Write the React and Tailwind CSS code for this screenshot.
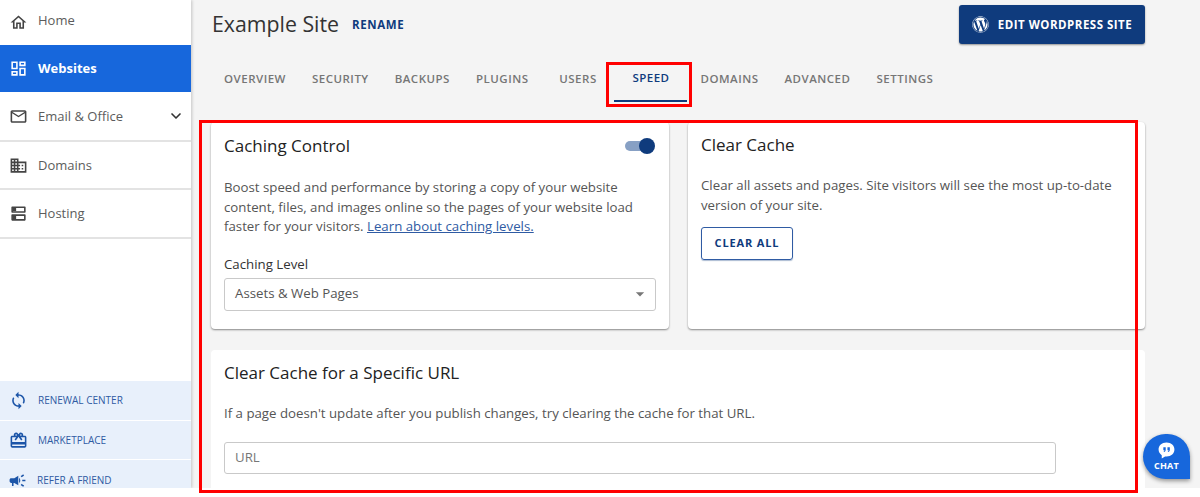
import React from 'react';
import { ChevronDown } from 'lucide-react';
import { FaWordpress } from 'react-icons/fa';
import {
  MdOutlineHome, MdOutlineDashboard, MdOutlineMailOutline, MdOutlineDomain,
  MdSync, MdOutlineRedeem, MdCampaign, MdArrowDropDown,
} from 'react-icons/md';

const font = { fontFamily: "'Open Sans', sans-serif" };

function HostingIcon({ className }) {
  return (
    <svg viewBox="0 0 24 24" className={className} fill="currentColor">
      <path fillRule="evenodd" d="M4 3h16a1 1 0 0 1 1 1v6a1 1 0 0 1-1 1H4a1 1 0 0 1-1-1V4a1 1 0 0 1 1-1zm1 2v4h14V5H5zM4 13h16a1 1 0 0 1 1 1v6a1 1 0 0 1-1 1H4a1 1 0 0 1-1-1v-6a1 1 0 0 1 1-1zm1 2v4h14v-4H5z" />
      <rect x="5" y="5" width="4" height="4" />
      <rect x="5" y="15" width="4" height="4" />
    </svg>
  );
}

function NavItem({ icon: Icon, label, active, border, chevron, height, textClass }) {
  return (
    <div className={`flex items-center pl-[9px] pr-[7px] ${height} ${border ? 'border-b-2 border-[#e3e3e3]' : ''} ${active ? 'bg-[#1767dc] text-white font-bold' : 'text-[#5c5c5c]'}`}>
      <Icon className={`w-[19px] h-[19px] shrink-0 ${active ? 'text-white' : 'text-[#444444]'}`} />
      <span className={`ml-[10px] text-[13px] flex-1 ${textClass || ''}`}>{label}</span>
      {chevron && <ChevronDown className="w-[16px] h-[16px] text-[#333333]" strokeWidth={2.5} />}
    </div>
  );
}

function PromoItem({ icon: Icon, label, height, tight }) {
  return (
    <div className={`flex items-center shrink-0 bg-[#e8f0fb] text-[#2f5ba3] ${height} ${tight ? 'pl-[8px]' : 'pl-[9px] mb-px'}`}>
      <Icon className="w-[19px] h-[19px] shrink-0 text-[#1c55a8]" />
      <span className="ml-[10px] text-[10px]">{label}</span>
    </div>
  );
}

function Tab({ label, active }) {
  return (
    <div className={`h-[46px] min-w-[73px] px-[13px] flex items-center justify-center text-[11.5px] font-semibold tracking-[0.5px] ${active ? 'text-[#0f3b7d] border-b-2 border-[#0f3b7d]' : 'text-[#767676]'}`}>
      {label}
    </div>
  );
}

export default function App() {
  const tabs = ['OVERVIEW', 'SECURITY', 'BACKUPS', 'PLUGINS', 'USERS', 'SPEED', 'DOMAINS', 'ADVANCED', 'SETTINGS'];

  return (
    <div className="relative w-[1200px] h-[497px] overflow-hidden bg-white" style={font}>
      <div className="flex h-[488px] overflow-hidden">

        {/* Sidebar */}
        <aside className="w-[191px] shrink-0 bg-white flex flex-col justify-between shadow-[1px_0_3px_rgba(0,0,0,0.2)] z-10">
          <div className="flex flex-col">
            <NavItem icon={MdOutlineHome} label="Home" height="h-[45px]" textClass="pb-[3px]" />
            <NavItem icon={MdOutlineDashboard} label="Websites" active height="h-[47px]" />
            <NavItem icon={MdOutlineMailOutline} label="Email & Office" chevron border height="h-[50px]" textClass="pt-px" />
            <NavItem icon={MdOutlineDomain} label="Domains" border height="h-[48px]" textClass="pt-px" />
            <NavItem icon={HostingIcon} label="Hosting" border height="h-[49px]" textClass="pt-px" />
          </div>
          <div className="flex flex-col h-[107px] overflow-hidden">
            <PromoItem icon={MdSync} label="RENEWAL CENTER" height="h-[39px]" />
            <PromoItem icon={MdOutlineRedeem} label="MARKETPLACE" height="h-[38px]" />
            <PromoItem icon={MdCampaign} label="REFER A FRIEND" height="h-[40px]" tight />
          </div>
        </aside>

        {/* Main */}
        <main className="flex-1 bg-[#f4f4f4] pl-[20px] pr-[55px] overflow-hidden">
          <div className="flex items-start justify-between h-[56px] pt-[5px]">
            <div className="flex items-center h-[40px] pl-px">
              <h1 className="text-[21.3px] text-[#333333] leading-none pb-[2px]">Example Site</h1>
              <span className="ml-[13px] text-[11.5px] font-bold tracking-[0.6px] text-[#0f3b7d]">RENAME</span>
            </div>
            <button className="w-[186px] h-[39px] rounded-[3px] bg-[#0f3b7d] text-white flex items-center justify-center gap-[9px] text-[11.5px] font-bold tracking-[0.5px] shadow-[0_1px_2px_rgba(0,0,0,0.4)]">
              <FaWordpress className="w-[17px] h-[17px]" />
              EDIT WORDPRESS SITE
            </button>
          </div>

          <div className="flex mb-[20px]">
            {tabs.map((t) => <Tab key={t} label={t} active={t === 'SPEED'} />)}
          </div>

          <div className="grid grid-cols-[458px_457px] gap-x-[19px]">
            <section className="h-[207px] bg-white rounded-[4px] shadow-[0_1px_2px_rgba(0,0,0,0.45)] px-[13px] pt-[13px]">
              <div className="flex items-center justify-between h-[22px]">
                <h2 className="text-[17px] font-medium text-[#222222]">Caching Control</h2>
                <div className="relative w-[30px] h-[16px] mr-px flex items-center">
                  <div className="w-[28px] h-[10px] rounded-full bg-[#87a0c4]" />
                  <div className="absolute right-0 top-0 w-[16px] h-[16px] rounded-full bg-[#0f3b7d]" />
                </div>
              </div>
              <p className="mt-[21px] text-[13.25px] leading-[19.5px] text-[#555555]">
                Boost speed and performance by storing a copy of your website content, files, and images online so the pages of your website load faster for your visitors.{' '}
                <a className="text-[#2f5ba3] underline">Learn about caching levels.</a>
              </p>
              <div className="mt-[18px] text-[13.25px] font-medium text-[#333333] leading-[18px]">Caching Level</div>
              <div className="mt-[5px] h-[33px] border border-[#c9c9c9] rounded-[3px] flex items-center justify-between pl-[10px] pr-[5px] text-[13.25px] text-[#555555]">
                Assets & Web Pages
                <MdArrowDropDown className="w-[20px] h-[20px] text-[#777777]" />
              </div>
            </section>

            <section className="h-[207px] bg-white rounded-[4px] shadow-[0_1px_2px_rgba(0,0,0,0.45)] px-[13px] pt-[12px]">
              <h2 className="text-[17px] font-medium text-[#222222] leading-[22px]">Clear Cache</h2>
              <p className="mt-[20px] text-[13.25px] leading-[19.5px] text-[#555555]">
                Clear all assets and pages. Site visitors will see the most up-to-date version of your site.
              </p>
              <button className="mt-[12px] w-[92px] h-[33px] rounded-[3px] border border-[#2f5ba3] text-[#0f3b7d] text-[11px] font-bold tracking-[0.85px] shadow-[0_1px_1px_rgba(15,59,125,0.35)]">
                CLEAR ALL
              </button>
            </section>

            <section className="col-span-2 mt-[21px] h-[150px] bg-white rounded-t-[4px] px-[13px] pt-[12px]">
              <h2 className="text-[17px] font-medium text-[#222222] leading-[22px]">Clear Cache for a Specific URL</h2>
              <p className="mt-[19px] text-[13.25px] leading-[20px] text-[#555555]">
                If a page doesn't update after you publish changes, try clearing the cache for that URL.
              </p>
              <div className="mt-[19px] w-[832px] h-[32px] border border-[#c9c9c9] rounded-[3px] flex items-center pl-[10px] text-[13.25px] text-[#777777]">
                URL
              </div>
            </section>
          </div>
        </main>
      </div>

      {/* Chat bubble */}
      <div className="absolute left-[1143px] top-[434px] w-[47px] h-[45px] rounded-full rounded-br-none bg-[#1767dc] shadow-[0_2px_4px_rgba(0,0,0,0.4)] flex flex-col items-center justify-center pb-[2px] text-white z-20">
        <svg viewBox="0 0 24 24" className="w-[19px] h-[19px]">
          <path fill="#ffffff" d="M12 2C6 2 2 5.8 2 10.8c0 3 1.6 5.5 4 7.1V22l4.2-2.5c.6.1 1.2.1 1.8.1 6 0 10-3.9 10-8.8S18 2 12 2z" />
          <path fill="#1767dc" d="M8 8h3v3.2c0 1.4-.8 2.4-2.2 2.8l-.4-1c.6-.3 1-.8 1-1.4H8V8zm5.2 0h3v3.2c0 1.4-.8 2.4-2.2 2.8l-.4-1c.6-.3 1-.8 1-1.4h-1.4V8z" />
        </svg>
        <span className="text-[9px] font-bold leading-[11px] tracking-[0.2px]">CHAT</span>
      </div>

      {/* Red annotation boxes */}
      <div className="absolute left-[606px] top-[62px] w-[86px] h-[45px] border-[3px] border-[#ff0000] z-30" />
      <div className="absolute left-[199px] top-[120px] w-[939px] h-[373px] border-[3px] border-[#ff0000] z-30" />
    </div>
  );
}
